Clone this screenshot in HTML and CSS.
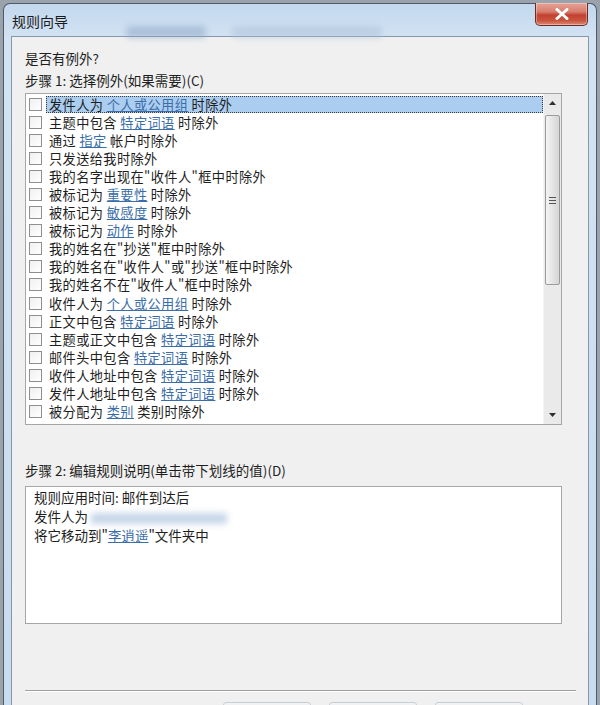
FILE: index.html
```html
<!DOCTYPE html>
<html lang="zh-CN">
<head>
<meta charset="utf-8">
<title>规则向导</title>
<link rel="stylesheet" href="styles.css">
</head>
<body>
<div class="window">
  <div class="titlebar">
    <span class="title">规则向导</span>
    <span class="glass-blur b1"></span>
    <span class="glass-blur b2"></span>
    <button class="close" aria-label="关闭">
      <svg width="14" height="12" viewBox="0 0 14 12"><path d="M2 1.5 L12 10.5 M12 1.5 L2 10.5" stroke="#fff" stroke-width="3" stroke-linecap="round"/></svg>
    </button>
  </div>
  <div class="panel">
    <div class="label">是否有例外?</div>
    <div class="label step1">步骤 1: 选择例外(如果需要)(C)</div>
    <div class="listbox">
      <div class="rows">
        <div class="row"><span class="cb"></span><span class="txt selected">发件人为 <a>个人或公用组</a> 时除外</span></div>
        <div class="row"><span class="cb"></span><span class="txt">主题中包含 <a>特定词语</a> 时除外</span></div>
        <div class="row"><span class="cb"></span><span class="txt">通过 <a>指定</a> 帐户时除外</span></div>
        <div class="row"><span class="cb"></span><span class="txt">只发送给我时除外</span></div>
        <div class="row"><span class="cb"></span><span class="txt">我的名字出现在"收件人"框中时除外</span></div>
        <div class="row"><span class="cb"></span><span class="txt">被标记为 <a>重要性</a> 时除外</span></div>
        <div class="row"><span class="cb"></span><span class="txt">被标记为 <a>敏感度</a> 时除外</span></div>
        <div class="row"><span class="cb"></span><span class="txt">被标记为 <a>动作</a> 时除外</span></div>
        <div class="row"><span class="cb"></span><span class="txt">我的姓名在"抄送"框中时除外</span></div>
        <div class="row"><span class="cb"></span><span class="txt">我的姓名在"收件人"或"抄送"框中时除外</span></div>
        <div class="row"><span class="cb"></span><span class="txt">我的姓名不在"收件人"框中时除外</span></div>
        <div class="row"><span class="cb"></span><span class="txt">收件人为 <a>个人或公用组</a> 时除外</span></div>
        <div class="row"><span class="cb"></span><span class="txt">正文中包含 <a>特定词语</a> 时除外</span></div>
        <div class="row"><span class="cb"></span><span class="txt">主题或正文中包含 <a>特定词语</a> 时除外</span></div>
        <div class="row"><span class="cb"></span><span class="txt">邮件头中包含 <a>特定词语</a> 时除外</span></div>
        <div class="row"><span class="cb"></span><span class="txt">收件人地址中包含 <a>特定词语</a> 时除外</span></div>
        <div class="row"><span class="cb"></span><span class="txt">发件人地址中包含 <a>特定词语</a> 时除外</span></div>
        <div class="row"><span class="cb"></span><span class="txt">被分配为 <a>类别</a> 类别时除外</span></div>
      </div>
      <div class="scrollbar">
        <div class="arrow">
          <svg width="7" height="4" viewBox="0 0 7 4"><path d="M0 4 L3.5 0 L7 4 Z" fill="#303030"/></svg>
        </div>
        <div class="thumb">
          <svg width="7" height="7" viewBox="0 0 7 7"><path d="M0 0.5 H7 M0 3.5 H7 M0 6.5 H7" stroke="#555" stroke-width="1"/></svg>
        </div>
        <div class="track"></div>
        <div class="arrow">
          <svg width="7" height="4" viewBox="0 0 7 4"><path d="M0 0 L3.5 4 L7 0 Z" fill="#303030"/></svg>
        </div>
      </div>
    </div>
    <div class="label step2">步骤 2: 编辑规则说明(单击带下划线的值)(D)</div>
    <div class="descbox">
      <div class="line">规则应用时间: 邮件到达后</div>
      <div class="line">发件人为 <span class="blurred"></span></div>
      <div class="line">将它移动到"<a>李逍遥</a>"文件夹中</div>
    </div>
    <div class="separator"></div>
    <div class="buttons">
      <span class="btn"></span>
      <span class="btn"></span>
      <span class="btn"></span>
    </div>
  </div>
</div>
</body>
</html>
```
FILE: styles.css
```css
* { box-sizing: border-box; }
html, body { height: 100%; }
body {
  margin: 0;
  padding: 3px 3px 0 3px;
  background: #9aa2ab;
  overflow: hidden;
  font-family: "Noto Sans CJK SC", "Microsoft YaHei", sans-serif;
  font-size: 13.5px;
  color: #1e1e1e;
}
.window {
  height: 100%;
  border: 1px solid #4f5a66;
  border-bottom: none;
  border-radius: 7px 7px 0 0;
  background: linear-gradient(180deg, #c3d8ee 0px, #d3e3f3 36px, #c7dcef 100%);
  padding: 0 7px;
  display: flex;
  flex-direction: column;
}
.titlebar {
  position: relative;
  height: 32px;
  flex: none;
  display: flex;
  align-items: flex-start;
  justify-content: space-between;
  margin: 0 -7px;
  padding-left: 8px;
}
.title {
  font-size: 14px;
  line-height: 18px;
  margin-top: 8px;
  color: #1a1a1a;
}
.glass-blur {
  position: absolute;
  top: 22px;
  height: 12px;
  border-radius: 4px;
  filter: blur(3px);
}
.glass-blur.b1 { left: 122px; width: 80px; background: #8fa8c6; opacity: 0.55; }
.glass-blur.b2 { left: 228px; width: 150px; background: #aabfd6; opacity: 0.5; }
.close {
  margin: -1px 8px 0 0;
  width: 53px;
  height: 23px;
  border: 1px solid #6a2c25;
  border-top: none;
  border-radius: 0 0 5px 5px;
  background: linear-gradient(180deg, #e6a497 0%, #d77d6c 40%, #c2402f 55%, #c9553f 80%, #dc8a73 100%);
  display: flex;
  align-items: center;
  justify-content: center;
  padding: 0;
  box-shadow: inset 0 0 0 1px rgba(255,255,255,0.35);
}
.panel {
  flex: 1;
  background: #f0f0f0;
  border: 1px solid #8397ad;
  border-bottom: none;
  padding: 12px 13px 0 13px;
  display: flex;
  flex-direction: column;
}
.label { line-height: 18px; }
.step1 { margin-top: 4px; }
.listbox {
  margin-top: 4px;
  width: 537px;
  height: 332px;
  border: 1px solid #a6a6a6;
  background: #fff;
  display: flex;
  flex: none;
}
.rows {
  flex: 1;
  padding-top: 1px;
}
.row {
  height: 18.1px;
  display: flex;
  align-items: center;
}
.cb {
  flex: none;
  width: 13px;
  height: 13px;
  margin-left: 3px;
  border: 1px solid #8e8f8f;
  background: linear-gradient(135deg, #f0f0f0, #ffffff);
}
.txt {
  margin-left: 4px;
  padding: 0 2px;
  font-size: 13.2px;
  letter-spacing: 0.4px;
  line-height: 15px;
  border: 1px solid transparent;
  white-space: nowrap;
}
.txt.selected {
  flex: 1;
  background: #abcdf0;
  border: 1px dotted #3a3a3a;
}
a {
  color: #3b6ea8;
  text-decoration: underline;
}
.scrollbar {
  width: 18px;
  flex: none;
  background: #eaeaea;
  display: flex;
  flex-direction: column;
  border-left: 1px solid #f4f4f4;
}
.arrow {
  height: 18px;
  display: flex;
  align-items: center;
  justify-content: center;
}
.thumb {
  height: 170px;
  margin: 3px 1px 0 1px;
  border: 1px solid #9b9b9b;
  border-radius: 2px;
  background: linear-gradient(90deg, #f3f3f3, #e2e2e2 60%, #d4d4d4);
  display: flex;
  align-items: center;
  justify-content: center;
}
.track { flex: 1; }
.step2 { margin-top: 36px; }
.descbox {
  margin-top: 7px;
  width: 537px;
  height: 138px;
  border: 1px solid #a6a6a6;
  background: #fff;
  padding: 1px 8px;
  flex: none;
}
.line { line-height: 19px; white-space: nowrap; }
.blurred {
  display: inline-block;
  vertical-align: middle;
  width: 136px;
  height: 11px;
  background: #b9cde3;
  filter: blur(3px);
  opacity: 0.8;
}
.separator {
  margin-top: 66px;
  width: 551px;
  height: 2px;
  border-top: 1px solid #a0a0a0;
  border-bottom: 1px solid #ffffff;
  flex: none;
}
.buttons {
  margin-top: 10px;
  display: flex;
  gap: 18px;
  padding-left: 198px;
}
.btn {
  width: 88px;
  height: 24px;
  border: 1px solid #8a9bab;
  border-radius: 3px;
  background: linear-gradient(#f4f8fb, #dfe8ef);
  opacity: 0.4;
}
```
